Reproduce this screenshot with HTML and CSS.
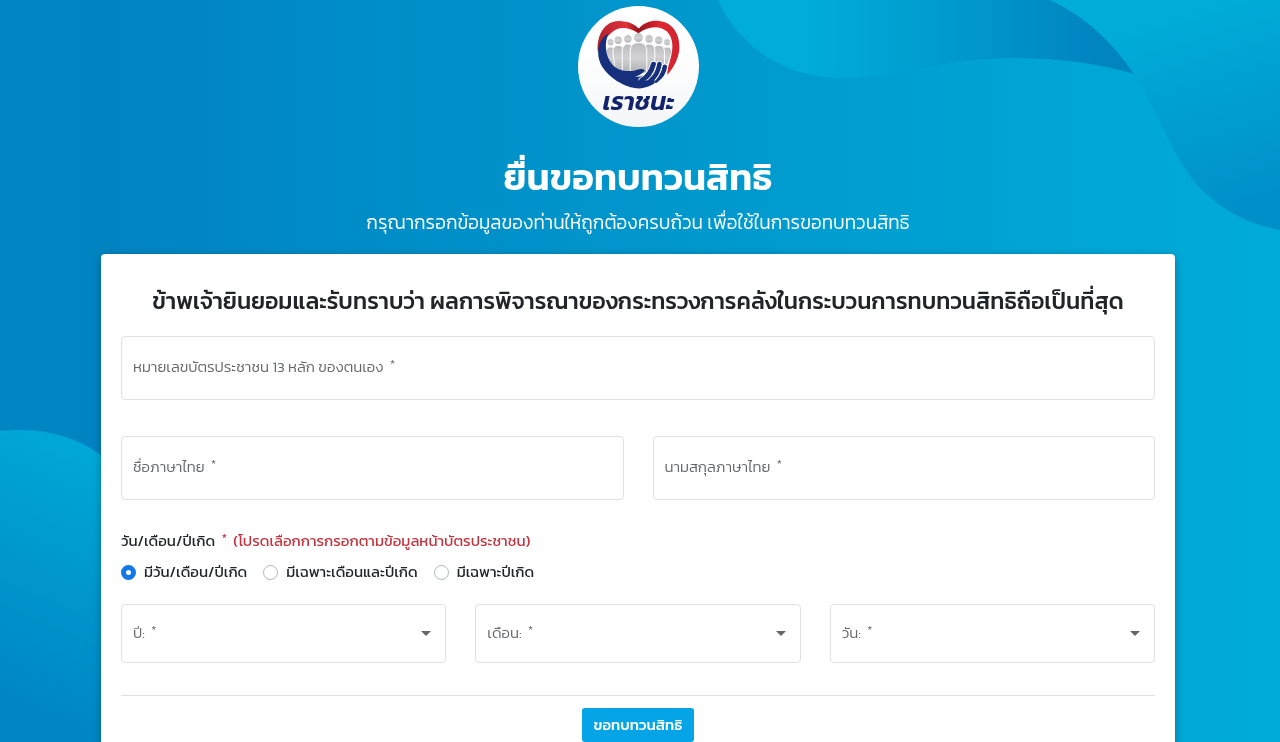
FILE: index.html
```html
<!DOCTYPE html>
<html lang="th">

<head>
    <meta charset="UTF-8">
    <meta name="viewport" content="width=device-width, initial-scale=1.0">
    <title>ยื่นขอทบทวนสิทธิ</title>
    <link rel="stylesheet" href="styles.css">
</head>

<body>
    <svg class="waves" viewBox="0 0 1280 742" preserveAspectRatio="none" aria-hidden="true">
        <defs>
            <linearGradient id="base" x1="0" y1="0" x2="1" y2="0">
                <stop offset="0" stop-color="#0087c3" />
                <stop offset="0.08" stop-color="#0084c1" />
                <stop offset="0.5" stop-color="#0096cc" />
                <stop offset="0.85" stop-color="#00a6d6" />
                <stop offset="1" stop-color="#00abd9" />
            </linearGradient>
            <linearGradient id="top" x1="0" y1="0" x2="1" y2="0">
                <stop offset="0.2" stop-color="#00acd9" />
                <stop offset="0.5" stop-color="#009ed0" />
                <stop offset="0.9" stop-color="#0085c1" />
            </linearGradient>
            <linearGradient id="right" x1="0.3" y1="0" x2="0.6" y2="1">
                <stop offset="0.1" stop-color="#00add9" />
                <stop offset="1" stop-color="#008fc8" />
            </linearGradient>
            <linearGradient id="left" x1="0.6" y1="0" x2="0.3" y2="1">
                <stop offset="0" stop-color="#00acd9" />
                <stop offset="0.8" stop-color="#008cc6" />
                <stop offset="1" stop-color="#0085c2" />
            </linearGradient>
        </defs>
        <rect width="1280" height="742" fill="url(#base)" />
        <path fill="url(#top)" d="M718 0C742 52 790 80 850 78C905 76 950 58 1010 58C1060 58 1100 64 1134 74C1112 42 1086 17 1050 0Z" />
        <path fill="url(#right)" d="M1050 0C1090 18 1113 43 1134 74C1160 116 1176 165 1204 192C1228 214 1252 225 1280 230V0Z" />
        <path fill="url(#left)" d="M0 431C38 427 72 434 101 455C150 495 170 600 220 742H0Z" />
    </svg>

    <main class="page">
        <header class="header">
            <svg class="logo" viewBox="28 18 364 364" role="img" aria-label="เราชนะ">
                <defs>
                    <linearGradient id="plate" x1="0" y1="0" x2="0" y2="1">
                        <stop offset="0.4" stop-color="#fff" />
                        <stop offset="1" stop-color="#f3f5f7" />
                    </linearGradient>
                    <linearGradient id="people" x1="0" y1="0" x2="0" y2="1">
                        <stop offset="0" stop-color="#bcbcbe" />
                        <stop offset="0.5" stop-color="#d2d2d4" />
                        <stop offset="1" stop-color="#aeb0b2" />
                    </linearGradient>
                    <linearGradient id="red" x1="0" y1="0" x2="1" y2="0">
                        <stop offset="0" stop-color="#b5202c" />
                        <stop offset="0.35" stop-color="#e0323b" />
                        <stop offset="0.5" stop-color="#96121c" />
                        <stop offset="0.75" stop-color="#df2631" />
                        <stop offset="1" stop-color="#cf2430" />
                    </linearGradient>
                </defs>
                <circle cx="210" cy="200" r="182" fill="url(#plate)" />
                <!-- row of people -->
                <g fill="url(#people)" stroke="#fff" stroke-width="3">
                    <circle cx="126" cy="127" r="11" />
                    <circle cx="296" cy="127" r="11" />
                    <path d="M112 158Q112 141 126 141T142 158V205H130Z" />
                    <path d="M281 158Q281 141 296 141T310 158L294 205H281Z" />
                    <circle cx="149" cy="121" r="13" />
                    <circle cx="271" cy="121" r="13" />
                    <path d="M133 156Q133 136 149 136T166 156V215H140Z" />
                    <path d="M254 156Q254 136 271 136T288 156V205H254Z" />
                    <circle cx="178" cy="117" r="13" />
                    <circle cx="242" cy="117" r="13" />
                    <path d="M161 154Q161 132 178 132T196 154V220H161Z" />
                    <path d="M224 154Q224 132 242 132T259 154V215H224Z" />
                    <circle cx="210" cy="113" r="15" />
                    <path d="M185 153Q185 128 210 128T235 153V220H185Z" />
                </g>
                <!-- heart -->
                <path fill="url(#red)" d="M88 158C82 108 108 63 150 63C180 63 200 74 211 86C226 68 248 61 272 63C316 67 336 108 333 148C330 176 317 202 297 225C296 206 302 194 305 181C316 146 315 116 296 95C272 76 241 78 210 100C178 80 149 78 127 100C108 116 99 136 88 158Z" />
                <path fill="#16307d" d="M120 100C84 122 82 168 100 199C120 231 165 264 213 266C240 264 262 250 280 236L262 208L240 218C230 226 215 232 200 231C213 226 225 220 229 212C222 204 211 208 202 211C178 218 146 212 130 193C110 165 106 132 120 100Z" />
                <!-- fingers -->
                <g fill="none" stroke-linecap="round">
                    <path stroke="#fff" stroke-width="20" d="M289 201C287 217 277 232 262 242" />
                    <path stroke="#16307d" stroke-width="14" d="M289 201C287 217 277 232 262 242" />
                    <path stroke="#fff" stroke-width="20" d="M273 193C270 212 261 232 245 242" />
                    <path stroke="#16307d" stroke-width="14" d="M273 193C270 212 261 232 245 242" />
                    <path stroke="#fff" stroke-width="20" d="M255 193C250 212 242 230 220 241" />
                    <path stroke="#16307d" stroke-width="15" d="M255 193C250 212 242 230 220 241" />
                    <path stroke="#16307d" stroke-width="14" d="M190 244C210 250 235 250 252 245" />
                </g>
                <text class="logo-text" x="210" y="330" text-anchor="middle">เราชนะ</text>
            </svg>
            <h1 class="title">ยื่นขอทบทวนสิทธิ</h1>
            <p class="subtitle">กรุณากรอกข้อมูลของท่านให้ถูกต้องครบถ้วน เพื่อใช้ในการขอทบทวนสิทธิ</p>
        </header>

        <form class="card">
            <h2 class="consent">ข้าพเจ้ายินยอมและรับทราบว่า ผลการพิจารณาของกระทรวงการคลังในกระบวนการทบทวนสิทธิถือเป็นที่สุด</h2>

            <div class="field">
                <input type="text" id="citizen-id" inputmode="numeric" maxlength="13" required>
                <label for="citizen-id">หมายเลขบัตรประชาชน 13 หลัก ของตนเอง <span class="star">*</span></label>
            </div>

            <div class="row names">
                <div class="field">
                    <input type="text" id="first-name" required>
                    <label for="first-name">ชื่อภาษาไทย <span class="star">*</span></label>
                </div>
                <div class="field">
                    <input type="text" id="last-name" required>
                    <label for="last-name">นามสกุลภาษาไทย <span class="star">*</span></label>
                </div>
            </div>

            <fieldset class="birth">
                <legend>วัน/เดือน/ปีเกิด <span class="star hint">*</span> <span class="hint">(โปรดเลือกการกรอกตามข้อมูลหน้าบัตรประชาชน)</span></legend>
                <div class="radios">
                    <label><input type="radio" name="birth" value="full" checked>มีวัน/เดือน/ปีเกิด</label>
                    <label><input type="radio" name="birth" value="month">มีเฉพาะเดือนและปีเกิด</label>
                    <label><input type="radio" name="birth" value="year">มีเฉพาะปีเกิด</label>
                </div>
            </fieldset>

            <div class="row">
                <div class="field select">
                    <select id="year" required><option value=""></option></select>
                    <label for="year">ปี: <span class="star">*</span></label>
                </div>
                <div class="field select">
                    <select id="month" required><option value=""></option></select>
                    <label for="month">เดือน: <span class="star">*</span></label>
                </div>
                <div class="field select">
                    <select id="day" required><option value=""></option></select>
                    <label for="day">วัน: <span class="star">*</span></label>
                </div>
            </div>

            <div class="actions">
                <button type="submit">ขอทบทวนสิทธิ</button>
            </div>
        </form>
    </main>
</body>

</html>
```
FILE: styles.css
```css
* {
    box-sizing: border-box;
}

body {
    margin: 0;
    background: #0095cc;
    color: #212529;
    font-family: Kanit, "Noto Sans", "Liberation Sans", sans-serif;
    font-size: 15px;
    font-weight: 300;
    line-height: 24px;
}

.waves {
    position: fixed;
    top: 0;
    left: 0;
    width: 100%;
    height: 100%;
    z-index: -1;
}

.page {
    padding: 6px 105px 0 101px;
}

.header {
    display: flex;
    flex-direction: column;
    align-items: center;
    color: #fff;
    text-align: center;
}

.logo {
    width: 121px;
    height: 121px;
}

.logo-text {
    fill: #14246c;
    font-size: 76px;
    font-weight: 600;
    font-style: italic;
}

.title {
    margin: 22px 0 0;
    font-size: 37px;
    font-weight: 600;
    line-height: 56px;
}

.subtitle {
    margin: 2px 0 15px;
    font-size: 19px;
    line-height: 32px;
}

.card {
    padding: 28px 20px 20px;
    background: #fff;
    border-radius: 4px;
    box-shadow: 0 2px 8px rgba(0, 0, 0, .3);
}

.consent {
    margin: 0 0 16px;
    font-size: 23px;
    font-weight: 500;
    line-height: 38px;
    text-align: center;
}

.row {
    display: flex;
    gap: 29px;
}

.names {
    margin: 36px 0 26px;
}

/* label sits over the empty control */
.field {
    display: grid;
    flex: 1;
    align-items: center;

    & input,
    & select,
    & label {
        grid-area: 1 / 1;
    }

    & input,
    & select {
        width: 100%;
        height: 64px;
        padding: 0 12px;
        border: 1px solid #dfe1e3;
        border-radius: 4px;
        background: #fff;
        font: inherit;
        color: inherit;
        appearance: none;
    }

    & select {
        height: 59px;
    }

    & label {
        padding: 0 12px 2px;
        color: #65676a;
        pointer-events: none;
    }
}

.select::after {
    content: "";
    grid-area: 1 / 1;
    justify-self: end;
    margin-right: 15px;
    border: 5px solid transparent;
    border-top-color: #666;
    border-bottom: 0;
    pointer-events: none;
}

.star {
    margin-left: 3px;
    font-size: 12px;
    vertical-align: 4px;
    line-height: 1;
}

.birth {
    margin: 0 0 16px;
    padding: 0;
    border: 0;
    font-weight: 400;

    & legend {
        padding: 0;
        line-height: 30px;
    }
}

.hint {
    color: #c0353f;
}

.star.hint {
    margin-right: 3px;
}

.radios {
    display: flex;
    flex-wrap: wrap;
    gap: 16px;
    line-height: 32px;

    & label {
        display: flex;
        align-items: center;
        gap: 8px;
    }

    & input {
        appearance: none;
        width: 15px;
        height: 15px;
        margin: 0;
        border: 1px solid #adb5bd;
        border-radius: 50%;
        background: #fff;
    }

    & input:checked {
        border: 5px solid #1277e8;
    }
}

.actions {
    margin-top: 32px;
    padding-top: 12px;
    border-top: 1px solid #dee2e6;
    text-align: center;

    & button {
        display: block;
        height: 34px;
        margin: 0 auto;
        padding: 0 12px;
        border: 0;
        border-radius: 3px;
        background: #04a4e6;
        color: #fff;
        font: inherit;
        font-weight: 500;
        cursor: pointer;
    }
}
```
